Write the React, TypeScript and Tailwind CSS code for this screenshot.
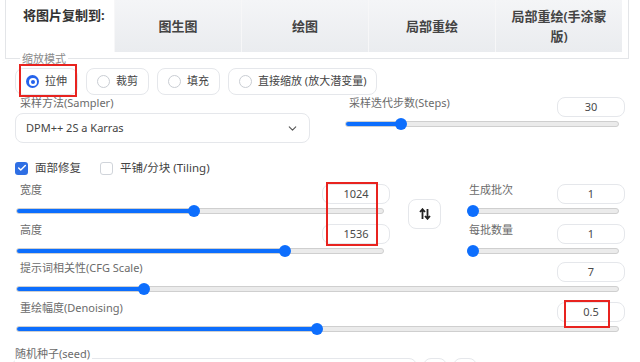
import { ChevronDown, Check } from "lucide-react";

const BLUE = "bg-[#0d6efd]";

function Slider({ p }: { p: number }) {
  return (
    <div className="relative h-[12px] ml-[1px] mr-[6px] flex items-center">
      <div className="h-[6px] w-full rounded-full bg-[#ebebeb] border border-[#cfcfcf] overflow-hidden">
        <div className={`h-full ${BLUE}`} style={{ width: `calc((100% - 12px) * ${p / 100} + 6px)` }} />
      </div>
      <div
        className={`absolute top-0 w-[12px] h-[12px] rounded-full ${BLUE}`}
        style={{ left: `calc((100% - 12px) * ${p / 100})` }}
      />
    </div>
  );
}

function NumBox({ v }: { v: string }) {
  return (
    <div className="mt-[1px] w-[68px] h-[20px] rounded-lg border border-[#e5e7eb] flex items-center justify-center text-[11px] text-[#4a4a4a]">
      {v}
    </div>
  );
}

function Field({ label, v, p, lp = "pl-[5px]" }: { label: string; v: string; p: number; lp?: string }) {
  return (
    <div>
      <div className="flex justify-between items-start h-[22px]">
        <span className={`${lp} text-[11px] leading-[14px] text-[#6b6b6b]`}>{label}</span>
        <NumBox v={v} />
      </div>
      <Slider p={p} />
    </div>
  );
}

function Radio({ label, on }: { label: string; on?: boolean }) {
  return (
    <div className="h-[27px] flex items-center gap-[6px] pl-[10px] pr-[10px] rounded-lg border border-[#e5e7eb] bg-white">
      {on ? (
        <span className="w-[13px] h-[13px] rounded-full bg-[#2563eb] flex items-center justify-center">
          <span className="w-[8px] h-[8px] rounded-full bg-white flex items-center justify-center">
            <span className="w-[4px] h-[4px] rounded-full bg-[#2563eb]" />
          </span>
        </span>
      ) : (
        <span className="w-[13px] h-[13px] rounded-full border border-[#c9cdd3] bg-white" />
      )}
      <span className="text-[11px] text-[#444]">{label}</span>
    </div>
  );
}

export default function App() {
  const tabs = ["图生图", "绘图", "局部重绘", "局部重绘(手涂蒙版)"];
  return (
    <div
      className="relative w-[640px] h-[362px] overflow-hidden bg-white"
      style={{ fontFamily: '"Noto Sans", "Noto Sans CJK SC", sans-serif' }}
    >
      {/* copy-to box */}
      <div className="ml-[5px] w-[624px] h-[59px] border-x border-b border-[#e3e5e8] flex">
        <div className="w-[108px] pl-[17px] pt-[6px] text-[13px] font-bold text-[#333]">将图片复制到:</div>
        <div className="flex flex-1 h-[52px] mr-[6px]">
          {tabs.map((t) => (
            <div
              key={t}
              className="flex-1 flex items-center justify-center px-[10px] text-center text-[13px] leading-[20px] font-semibold text-[#444] bg-gradient-to-b from-[#f4f5f7] to-[#eaecef] border-l border-[#f7f7f8]"
            >
              {t}
            </div>
          ))}
        </div>
      </div>

      <div className="-mt-[7px] ml-[20px] w-fit bg-white px-[2px] text-[11px] leading-[14px] text-[#8a8a8a]">缩放模式</div>

      <div className="mt-[2px] ml-[15px] flex gap-[8px]">
        <Radio label="拉伸" on />
        <Radio label="裁剪" />
        <Radio label="填充" />
        <Radio label="直接缩放 (放大潜变量)" />
      </div>

      {/* sampler / steps */}
      <div className="mt-[1px] flex">
        <div className="ml-[15px] w-[295px]">
          <div className="pl-[5px] text-[11px] leading-[14px] text-[#6b6b6b]">采样方法(Sampler)</div>
          <div className="mt-[3px] h-[30px] rounded-lg border border-[#e5e7eb] flex items-center justify-between pl-[10px] pr-[10px] text-[11px] text-[#444]">
            <span>DPM++ 2S a Karras</span>
            <ChevronDown size={13} className="text-[#555]" />
          </div>
        </div>
        <div className="ml-[34px] w-[281px]">
          <Field label="采样迭代步数(Steps)" v="30" p={19} />
        </div>
      </div>

      {/* checkboxes */}
      <div className="mt-[17px] ml-[15px] h-[16px] flex items-center">
        <span className="w-[13px] h-[13px] rounded-[3px] bg-[#2f6fe4] flex items-center justify-center">
          <Check size={10} strokeWidth={3.5} className="text-white" />
        </span>
        <span className="ml-[7px] text-[11.5px] text-[#444]">面部修复</span>
        <span className="ml-[19px] w-[13px] h-[13px] rounded-[3px] border border-[#d0d4da] bg-white" />
        <span className="ml-[7px] text-[11.5px] text-[#444]">平铺/分块 (Tiling)</span>
      </div>

      {/* width / height / batch */}
      <div className="mt-[7px] ml-[15px] w-[610px] flex">
        <div className="w-[375px] flex flex-col gap-[6px]">
          <Field label="宽度" v="1024" p={48.3} />
          <Field label="高度" v="1536" p={73.9} />
        </div>
        <div className="ml-[18px] mt-[16px] w-[33px] h-[30px] rounded-lg border border-[#e5e7eb] flex items-center justify-center">
          <svg width="12" height="12" viewBox="0 0 12 12" fill="none" stroke="#222" strokeWidth="1.8">
            <path d="M3.5 11V1.5M1 4l2.5-2.8L6 4" />
            <path d="M8.5 1v9.5M6 8l2.5 2.8L11 8" />
          </svg>
        </div>
        <div className="ml-[25px] w-[159px] flex flex-col gap-[6px]">
          <Field label="生成批次" v="1" p={0} lp="pl-[3px]" />
          <Field label="每批数量" v="1" p={0} lp="pl-[3px]" />
        </div>
      </div>

      {/* cfg / denoise */}
      <div className="mt-[4px] ml-[15px] w-[610px] flex flex-col gap-[6px]">
        <Field label="提示词相关性(CFG Scale)" v="7" p={20.6} />
        <Field label="重绘幅度(Denoising)" v="0.5" p={49.9} />
      </div>

      {/* seed */}
      <div className="mt-[12px] ml-[12px]">
        <div className="relative z-10 ml-[3px] w-fit bg-white pr-[2px] text-[11px] leading-[14px] text-[#6b6b6b]">随机种子(seed)</div>
        <div className="-mt-[3px] flex gap-[6px]">
          <div className="w-[405px] h-[30px] rounded-lg border border-[#e5e7eb]" />
          <div className="w-[24px] h-[30px] rounded-lg border border-[#e5e7eb]" />
          <div className="w-[24px] h-[30px] rounded-lg border border-[#e5e7eb]" />
        </div>
      </div>

      {/* red annotation boxes */}
      <div className="absolute left-[19px] top-[64px] w-[58px] h-[33px] border-2 border-[#e8231f]" />
      <div className="absolute left-[326px] top-[182px] w-[52px] h-[64px] border-2 border-[#e8231f]" />
      <div className="absolute left-[564px] top-[300px] w-[46px] h-[28px] border-2 border-[#e8231f]" />
    </div>
  );
}
